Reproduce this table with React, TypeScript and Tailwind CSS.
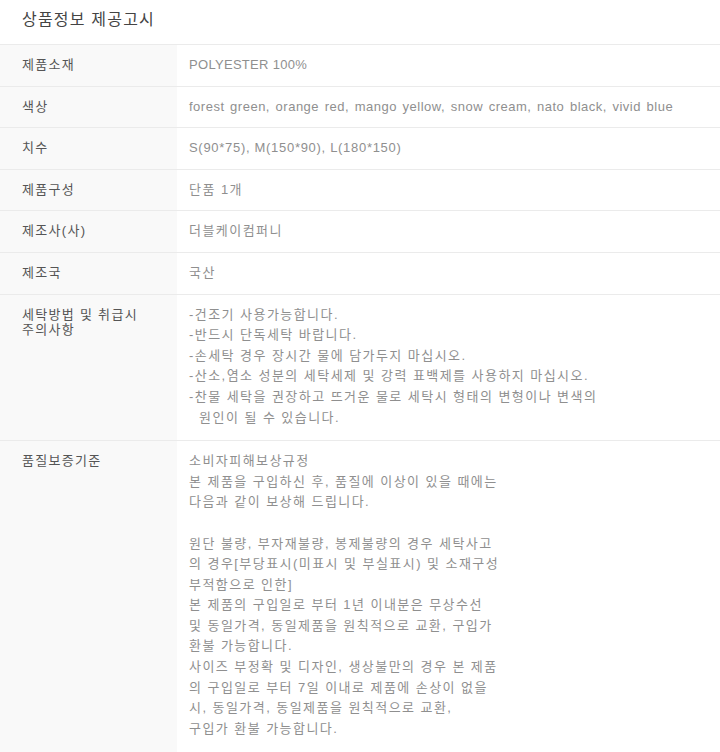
const rows: { label: string; value: string[]; track?: string }[] = [
  { label: "제품소재", value: ["POLYESTER 100%"], track: "tracking-[0.3px]" },
  {
    label: "색상",
    value: ["forest green, orange red, mango yellow, snow cream, nato black, vivid blue"],
    track: "tracking-[0.5px] [word-spacing:1.5px]",
  },
  { label: "치수", value: ["S(90*75), M(150*90), L(180*150)"], track: "tracking-[0.7px]" },
  { label: "제품구성", value: ["단품 1개"] },
  { label: "제조사(사)", value: ["더블케이컴퍼니"] },
  { label: "제조국", value: ["국산"] },
];

const washLines = [
  "-건조기 사용가능합니다.",
  "-반드시 단독세탁 바랍니다.",
  "-손세탁 경우 장시간 물에 담가두지 마십시오.",
  "-산소,염소 성분의 세탁세제 및 강력 표백제를 사용하지 마십시오.",
  "-찬물 세탁을 권장하고 뜨거운 물로 세탁시 형태의 변형이나 변색의",
  "  원인이 될 수 있습니다.",
];

const qualityLines = [
  "소비자피해보상규정",
  "본 제품을 구입하신 후, 품질에 이상이 있을 때에는",
  "다음과 같이 보상해 드립니다.",
  "",
  "원단 불량, 부자재불량, 봉제불량의 경우 세탁사고",
  "의 경우[부당표시(미표시 및 부실표시) 및 소재구성",
  "부적함으로 인한]",
  "본 제품의 구입일로 부터 1년 이내분은 무상수선",
  "및 동일가격, 동일제품을 원칙적으로 교환, 구입가",
  "환불 가능합니다.",
  "사이즈 부정확 및 디자인, 생상불만의 경우 본 제품",
  "의 구입일로 부터 7일 이내로 제품에 손상이 없을",
  "시, 동일가격, 동일제품을 원칙적으로 교환,",
  "구입가 환불 가능합니다.",
];

const Row = ({
  label,
  lines,
  pb,
  track,
}: {
  label: string;
  lines: string[];
  pb?: string;
  track?: string;
}) => {
  return (
    <div className="flex border-b border-[#ebebeb]">
      <div className="w-[177px] shrink-0 bg-[#f9f9f9] pl-[22px] pr-3 pt-[10px] text-[13px] leading-[20.6px] text-[#555] tracking-[1.3px]">
        {label}
      </div>
      <div
        className={`flex-1 pl-3 pt-[10px] ${pb ?? "pb-[10px]"} text-[13px] leading-[20.6px] text-[#8f8f8f] whitespace-pre ${
          track ?? "tracking-[1.45px]"
        }`}
      >
        {lines.map((l, i) => (
          <div key={i} className="h-[20.6px]">
            {l}
          </div>
        ))}
      </div>
    </div>
  );
};

export default function App() {
  return (
    <div
      className="w-[720px] h-[752px] overflow-hidden bg-white"
      style={{ fontFamily: '"Liberation Sans", "Noto Sans CJK KR", sans-serif' }}
    >
      <div className="pl-[22px] pt-[9px] h-[44px] text-[16px] leading-[22px] text-[#444] tracking-[1.2px]">
        상품정보 제공고시
      </div>
      <div className="border-t border-[#ebebeb]">
        {rows.map((r) => (
          <Row key={r.label} label={r.label} lines={r.value} track={r.track} />
        ))}
        <div className="flex border-b border-[#ebebeb]">
          <div className="w-[177px] shrink-0 bg-[#f9f9f9] pl-[22px] pr-3 pt-[12px] text-[13px] leading-[15px] text-[#555] tracking-[1.3px]">
            세탁방법 및 취급시
            <br />
            주의사항
          </div>
          <div className="flex-1 pl-3 pt-[10px] pb-[12px] text-[13px] leading-[20.6px] text-[#8f8f8f] tracking-[1.45px] whitespace-pre">
            {washLines.map((l, i) => (
              <div key={i} className="h-[20.6px]">
                {l}
              </div>
            ))}
          </div>
        </div>
        <Row label="품질보증기준" lines={qualityLines} pb="pb-[20px]" />
      </div>
    </div>
  );
}
